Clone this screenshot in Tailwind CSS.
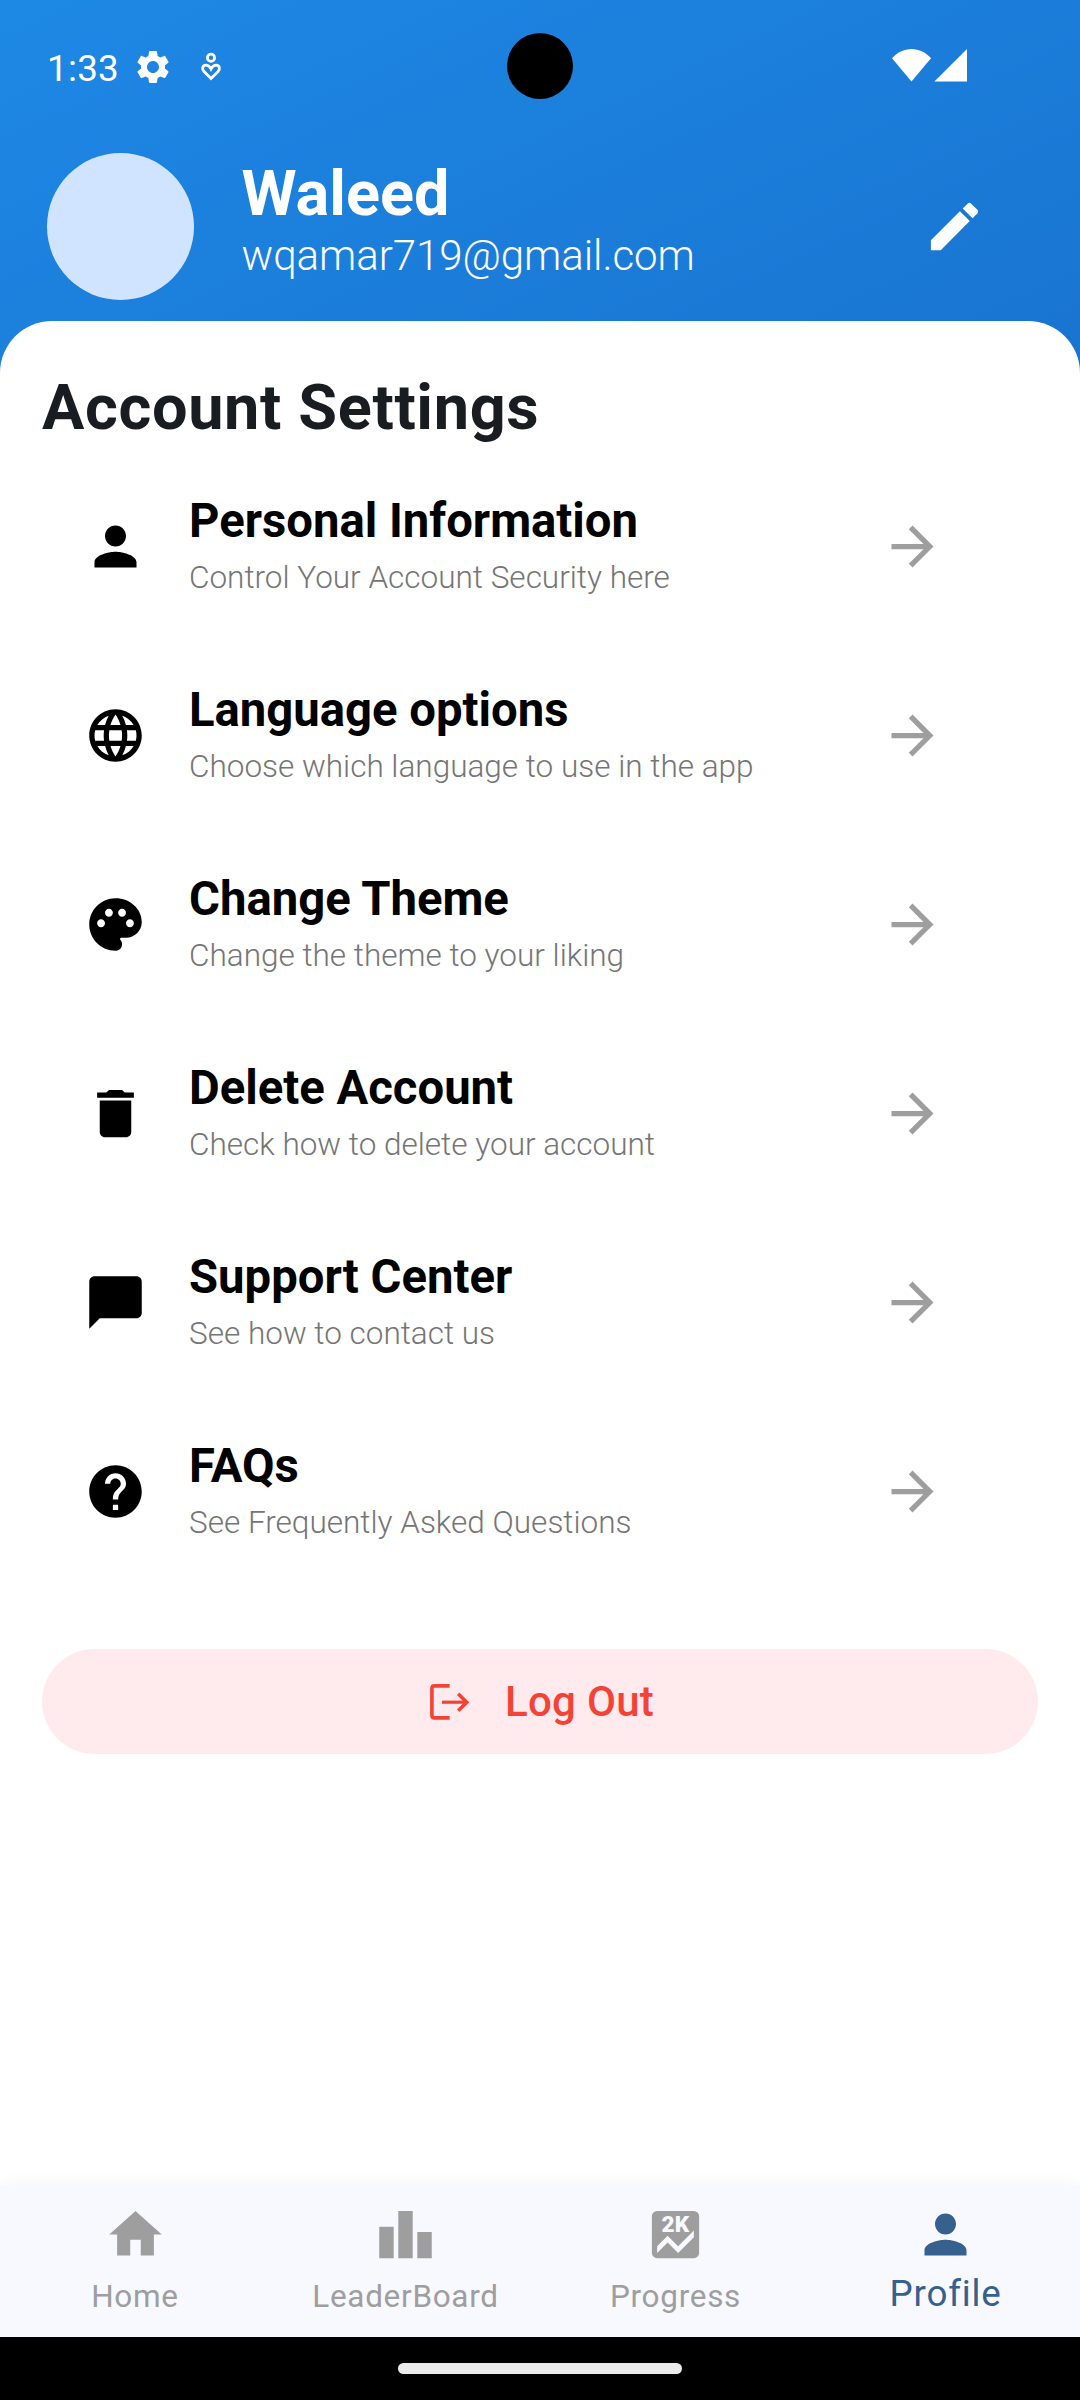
<!DOCTYPE html>
<html lang="en">
<head>
<meta charset="utf-8">
<title>Profile</title>
<script src="https://cdn.jsdelivr.net/npm/@tailwindcss/browser@4"></script>
</head>
<body class="w-[1080px] h-[2400px] overflow-hidden bg-black font-[Roboto,sans-serif]">
<div class="flex flex-col w-[1080px] h-[2337px] bg-[linear-gradient(155.2deg,#1e88e5,#0d47a1)]">

  <!-- Status bar -->
  <div class="relative flex items-start h-[153px] pl-[47px] text-white shrink-0">
    <span class="mt-[49px] w-[86px] h-10 leading-10 text-[36.75px] tracking-[0.3px]">1:33</span>
    <svg class="mt-[47px] size-10" viewBox="0 0 24 24" fill="currentColor"><path d="M19.14 12.94c.04-.3.06-.61.06-.94 0-.32-.02-.64-.07-.94l2.03-1.58c.18-.14.23-.41.12-.61l-1.92-3.32c-.12-.22-.37-.29-.59-.22l-2.39.96c-.5-.38-1.03-.7-1.62-.94l-.36-2.54c-.04-.24-.24-.41-.48-.41h-3.84c-.24 0-.43.17-.47.41l-.36 2.54c-.59.24-1.13.57-1.62.94l-2.39-.96c-.22-.08-.47 0-.59.22L2.74 8.87c-.12.21-.08.47.12.61l2.03 1.58c-.05.3-.09.63-.09.94s.02.64.07.94l-2.03 1.58c-.18.14-.23.41-.12.61l1.92 3.32c.12.22.37.29.59.22l2.39-.96c.5.38 1.03.7 1.62.94l.36 2.54c.05.24.24.41.48.41h3.84c.24 0 .44-.17.47-.41l.36-2.54c.59-.24 1.13-.56 1.62-.94l2.39.96c.22.08.47 0 .59-.22l1.92-3.32c.12-.22.07-.47-.12-.61l-2.01-1.58zM12 15.6c-1.98 0-3.6-1.62-3.6-3.6s1.62-3.6 3.6-3.6 3.6 1.62 3.6 3.6-1.62 3.6-3.6 3.6z"/></svg>
    <svg class="ml-[26px] mt-[51px] w-6 h-8" viewBox="0 0 24 32" fill="none" stroke="currentColor" stroke-width="2.8"><circle cx="12" cy="6.7" r="3.6"/><path d="M12 27.6L5 20.6C2.700 18.200 3.200 14.300 6.800 14.100C9.300 14 10.800 15.500 12 17.900C13.200 15.500 14.700 14 17.200 14.100C20.800 14.300 21.300 18.200 19 20.600Z"/></svg>
    <div class="absolute left-[507px] top-[33px] size-[66px] rounded-full bg-black"></div>
    <svg class="ml-[669px] mt-[49px] w-[75px] h-[33px]" viewBox="0 0 75 33" fill="currentColor"><path d="M0 9.300C5 3.500 12 0 19.500 0S34 3.500 39 9.300L19.500 32.600Z"/><path d="M42.400 32.600L75 0V32.600Z"/></svg>
  </div>

  <!-- User header -->
  <div class="flex items-start h-[168px] pl-[47px] pr-[94px] text-white shrink-0">
    <div class="size-[147px] rounded-full bg-[#d1e4ff]"></div>
    <div class="ml-[47.500px] mt-1 flex-1">
      <div class="h-[74px] leading-[74px] text-[63px] font-bold">Waleed</div>
      <div class="h-[49px] leading-[49px] text-[42px] font-light tracking-[-0.05px]">wqamar719@gmail.com</div>
    </div>
    <svg class="mt-[42px] size-[63px]" viewBox="0 0 24 24" fill="currentColor"><path d="M3 17.250V21h3.750L17.810 9.940l-3.750-3.750L3 17.250zM20.710 7.040c.39-.39.39-1.020 0-1.410l-2.340-2.340c-.39-.39-1.020-.39-1.410 0l-1.830 1.830 3.750 3.750 1.830-1.830z"/></svg>
  </div>

  <!-- Settings sheet -->
  <main class="flex-1 bg-white rounded-t-[52px] px-[42px] pt-[50px]">
    <h1 class="h-[81px] leading-[74px] text-[63px] font-bold tracking-[0.65px] text-[#191c20]">Account Settings</h1>

    <div id="settings"></div>

    <button class="mt-[63px] flex w-full h-[105px] items-center rounded-full bg-[#ffebee] text-[#f44336] pl-[384px]">
      <svg class="w-12 h-[42px]" viewBox="0 0 48 42" fill="none" stroke="currentColor" stroke-width="3.6"><path d="M23.600 4.900H8.500Q5.900 4.900 5.900 7.500V34.300Q5.900 36.900 8.500 36.900H23.600"/><path d="M16 21.200H41" stroke-width="3.200"/><path d="M32.200 12.700L40.700 21.200L32.200 29.700"/></svg>
      <span class="ml-[31px] text-[42px] leading-[49px] font-medium tracking-[0.3px]">Log Out</span>
    </button>
  </main>

  <!-- Bottom navigation -->
  <nav class="grid grid-cols-4 h-[152px] bg-[#f8f9ff] text-[#9e9e9e] shadow-[0_0_16px_rgba(0,0,0,0.05)] shrink-0 text-[31.5px] tracking-[0.7px] leading-10">
    <div class="flex flex-col items-center pt-[18px]">
      <svg class="size-[63px]" viewBox="0 0 24 24" fill="currentColor"><path d="M10 20v-6h4v6h5v-8h3L12 3 2 12h3v8z"/></svg>
      <span class="mt-[11px]">Home</span>
    </div>
    <div class="flex flex-col items-center pt-[18px]">
      <svg class="size-[63px]" viewBox="0 0 24 24" fill="currentColor"><path d="M7.500 21H2V9h5.500v12zm7.250-18h-5.500v18h5.500V3zM22 11h-5.500v10H22V11z"/></svg>
      <span class="mt-[11px] pl-px">LeaderBoard</span>
    </div>
    <div class="flex flex-col items-center pt-[18px]">
      <svg class="size-[63px]" viewBox="0 0 24 24"><rect x="3" y="3" width="18" height="18" rx="2" fill="currentColor"/><path d="M19 13l-6 6-4-4-4 4v-2.500l4-4 4 4 6-6z" fill="#f8f9ff"/><text x="6.700" y="11" textLength="10.500" lengthAdjust="spacingAndGlyphs" class="font-black text-[8.400px] tracking-normal" fill="#f8f9ff">2K</text></svg>
      <span class="mt-[11px] pl-px">Progress</span>
    </div>
    <div class="flex flex-col items-center pt-[18px] text-[#36618e]">
      <svg class="size-[63px]" viewBox="0 0 24 24" fill="currentColor"><path d="M12 12c2.210 0 4-1.790 4-4s-1.790-4-4-4-4 1.790-4 4 1.790 4 4 4zm0 2c-2.670 0-8 1.340-8 4v2h16v-2c0-2.660-5.330-4-8-4z"/></svg>
      <span class="mt-[8px] pl-px text-[36.75px] tracking-[0.8px]">Profile</span>
    </div>
  </nav>
</div>

<!-- Gesture bar -->
<div class="flex justify-center h-[63px] pt-[26px] bg-black">
  <div class="w-[284px] h-[11px] rounded-full bg-[#ebebeb]"></div>
</div>

<script>
const items = [
  ['Personal Information', 'Control Your Account Security here', 'M12 12c2.210 0 4-1.790 4-4s-1.790-4-4-4-4 1.790-4 4 1.790 4 4 4zm0 2c-2.670 0-8 1.340-8 4v2h16v-2c0-2.660-5.330-4-8-4z'],
  ['Language options', 'Choose which language to use in the app', 'M11.99 2C6.47 2 2 6.48 2 12s4.47 10 9.99 10C17.52 22 22 17.52 22 12S17.52 2 11.99 2zm6.93 6h-2.95c-.32-1.25-.78-2.45-1.38-3.56 1.84.63 3.37 1.91 4.33 3.56zM12 4.04c.83 1.2 1.48 2.53 1.91 3.96h-3.82c.43-1.43 1.08-2.76 1.91-3.96zM4.26 14C4.1 13.36 4 12.69 4 12s.1-1.36.26-2h3.38c-.08.66-.14 1.32-.14 2s.06 1.34.14 2H4.26zm.82 2h2.95c.32 1.25.78 2.45 1.38 3.56-1.84-.63-3.37-1.9-4.33-3.56zm2.95-8H5.08c.96-1.66 2.49-2.93 4.33-3.56C8.81 5.55 8.35 6.75 8.03 8zM12 19.96c-.83-1.2-1.48-2.53-1.91-3.96h3.82c-.43 1.43-1.08 2.76-1.91 3.96zM14.34 14H9.66c-.09-.66-.16-1.32-.16-2s.07-1.35.16-2h4.68c.09.65.16 1.32.16 2s-.07 1.34-.16 2zm.25 5.56c.6-1.11 1.06-2.31 1.38-3.56h2.95c-.96 1.65-2.49 2.93-4.33 3.56zM16.36 14c.08-.66.14-1.32.14-2s-.06-1.34-.14-2h3.38c.16.64.26 1.31.26 2s-.1 1.36-.26 2h-3.38z'],
  ['Change Theme', 'Change the theme to your liking', 'M12 2C6.49 2 2 6.49 2 12s4.490 10 10 10c1.380 0 2.500-1.120 2.500-2.500 0-.61-.23-1.200-.64-1.670-.08-.1-.13-.21-.13-.33 0-.28.22-.5.5-.5H16c3.310 0 6-2.690 6-6 0-4.960-4.490-9-10-9zm-5.500 11c-.83 0-1.500-.67-1.500-1.500S5.670 10 6.500 10s1.500.67 1.500 1.500S7.330 13 6.500 13zm3-4C8.670 9 8 8.330 8 7.500S8.670 6 9.500 6s1.500.67 1.500 1.500S10.330 9 9.500 9zm5 0c-.83 0-1.500-.67-1.500-1.500S13.670 6 14.500 6s1.500.67 1.500 1.500S15.330 9 14.500 9zm3 4c-.83 0-1.500-.67-1.500-1.500s.67-1.500 1.500-1.500 1.500.67 1.500 1.500-.67 1.500-1.500 1.500z'],
  ['Delete Account', 'Check how to delete your account', 'M6 19c0 1.100.9 2 2 2h8c1.100 0 2-.9 2-2V7H6v12zM19 4h-3.500l-1-1h-5l-1 1H5v2h14V4z'],
  ['Support Center', 'See how to contact us', 'M20 2H4c-1.100 0-1.990.9-1.990 2L2 22l4-4h14c1.100 0 2-.9 2-2V4c0-1.100-.9-2-2-2z'],
  ['FAQs', 'See Frequently Asked Questions', 'M12 2C6.48 2 2 6.48 2 12s4.480 10 10 10 10-4.480 10-10S17.520 2 12 2zm1 17h-2v-2h2v2zm2.070-7.750l-.9.92C13.450 12.900 13 13.500 13 15h-2v-.5c0-1.100.45-2.100 1.170-2.830l1.240-1.260c.37-.36.59-.86.59-1.410 0-1.100-.9-2-2-2s-2 .9-2 2H8c0-2.210 1.790-4 4-4s4 1.790 4 4c0 .88-.36 1.680-.93 2.250z'],
];
document.getElementById('settings').innerHTML = items.map(([title, sub, icon]) => `
  <div class="flex items-center h-[189px] pl-[42px] pr-[94px]">
    <svg class="size-[63px] text-black" viewBox="0 0 24 24" fill="currentColor"><path d="${icon}"/></svg>
    <div class="ml-[42px] flex-1 pb-[3px]">
      <div class="h-16 leading-[64px] text-[47.25px] font-bold text-black">${title}</div>
      <div class="h-12 leading-[50px] text-[31.5px] font-light text-[#757575]">${sub}</div>
    </div>
    <svg class="size-[63px] text-[#9e9e9e]" viewBox="0 0 24 24" fill="currentColor"><path d="M12 4l-1.410 1.410L16.170 11H4v2h12.170l-5.580 5.590L12 20l8-8z"/></svg>
  </div>`).join('');
</script>
</body>
</html>
